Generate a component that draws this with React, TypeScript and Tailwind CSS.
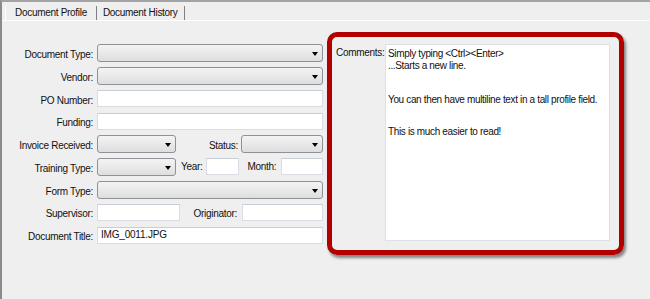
import React from 'react';

const font = { fontFamily: '"Liberation Sans", Arial, sans-serif' };

const Label = ({ children, className = '' }: { children: React.ReactNode; className?: string }) => (
  <span className={`text-[10px] tracking-[-0.3px] text-[#111] whitespace-nowrap leading-none ${className}`}>{children}</span>
);

const Combo = ({ className = '' }: { className?: string }) => (
  <div
    className={`relative h-[18px] rounded-[3px] border border-[#8e9195] bg-gradient-to-b from-[#f4f4f4] to-[#dedede] ${className}`}
  >
    <span className="absolute right-[4px] top-[7px] w-0 h-0 border-l-[3.5px] border-r-[3.5px] border-t-[4px] border-l-transparent border-r-transparent border-t-black" />
  </div>
);

const TextBox = ({ className = '', value = '' }: { className?: string; value?: string }) => (
  <div
    className={`h-[17px] border border-[#d9dde3] border-t-[#c9ced6] bg-white flex items-center pl-[3px] text-[10px] tracking-[-0.2px] text-[#111] leading-none ${className}`}
  >
    {value}
  </div>
);

const Row = ({ label, children }: { label: string; children: React.ReactNode }) => (
  <div className="flex items-center h-[18px]">
    <div className="w-[93px] text-right pr-[2px]">
      <Label>{label}</Label>
    </div>
    <div className="flex items-center ml-[2px]">{children}</div>
  </div>
);

export default function App() {
  return (
    <div style={font} className="relative w-[650px] h-[299px] overflow-hidden bg-[#efefef] border-t-2 border-t-[#a3a3a3] border-l-2 border-l-[#8a8a8a]">
      {/* tab strip */}
      <div className="flex items-end h-[19px] border-b border-b-white">
        <div className="ml-[3px] h-[14px] px-[9px] flex items-center border-l border-l-white border-r border-r-[#808080]">
          <Label className="text-[10.5px]">Document Profile</Label>
        </div>
        <div className="h-[14px] px-[6px] flex items-center border-r border-r-[#808080]">
          <Label className="text-[10.5px]">Document History</Label>
        </div>
      </div>

      {/* body */}
      <div className="flex mt-[23px]">
        <div className="flex flex-col gap-[4.75px] w-[323px]">
          <Row label="Document Type:">
            <Combo className="w-[226px]" />
          </Row>
          <Row label="Vendor:">
            <Combo className="w-[226px]" />
          </Row>
          <Row label="PO Number:">
            <TextBox className="w-[226px]" />
          </Row>
          <Row label="Funding:">
            <TextBox className="w-[226px]" />
          </Row>
          <Row label="Invoice Received:">
            <Combo className="w-[79px]" />
            <div className="w-[62px] text-right">
              <Label>Status:</Label>
            </div>
            <Combo className="w-[82px] ml-[3px]" />
          </Row>
          <Row label="Training Type:">
            <Combo className="w-[79px]" />
            <Label className="ml-[5px]">Year:</Label>
            <TextBox className="w-[33px] ml-[4px]" />
            <Label className="ml-[8px]">Month:</Label>
            <TextBox className="w-[42px] ml-[5px]" />
          </Row>
          <Row label="Form Type:">
            <Combo className="w-[226px]" />
          </Row>
          <Row label="Supervisor:">
            <TextBox className="w-[83px]" />
            <div className="w-[57px] text-right">
              <Label>Originator:</Label>
            </div>
            <TextBox className="w-[81px] ml-[5px]" />
          </Row>
          <Row label="Document Title:">
            <TextBox className="w-[226px]" value="IMG_0011.JPG" />
          </Row>
        </div>

        {/* comments */}
        <div className="flex ml-[11px]">
          <Label className="mt-[4px] w-[49px]">Comments:</Label>
          <div className="w-[225px] h-[197px] bg-white border border-[#dde1e7] pl-[2px] pt-[3px] text-[10px] tracking-[-0.35px] leading-[12px] text-[#111]">
            <div>Simply typing &lt;Ctrl&gt;&lt;Enter&gt;</div>
            <div>...Starts a new line.</div>
            <div className="mt-[22px]">You can then have multiline text in a tall profile field.</div>
            <div className="mt-[20px]">This is much easier to read!</div>
          </div>
        </div>
      </div>

      {/* highlight annotation */}
      <div className="absolute left-[325px] top-[30px] w-[297px] h-[223px] rounded-[10px] border-[5px] border-[#b20000] shadow-[2px_3px_3px_rgba(0,0,0,0.45)]" />
    </div>
  );
}
